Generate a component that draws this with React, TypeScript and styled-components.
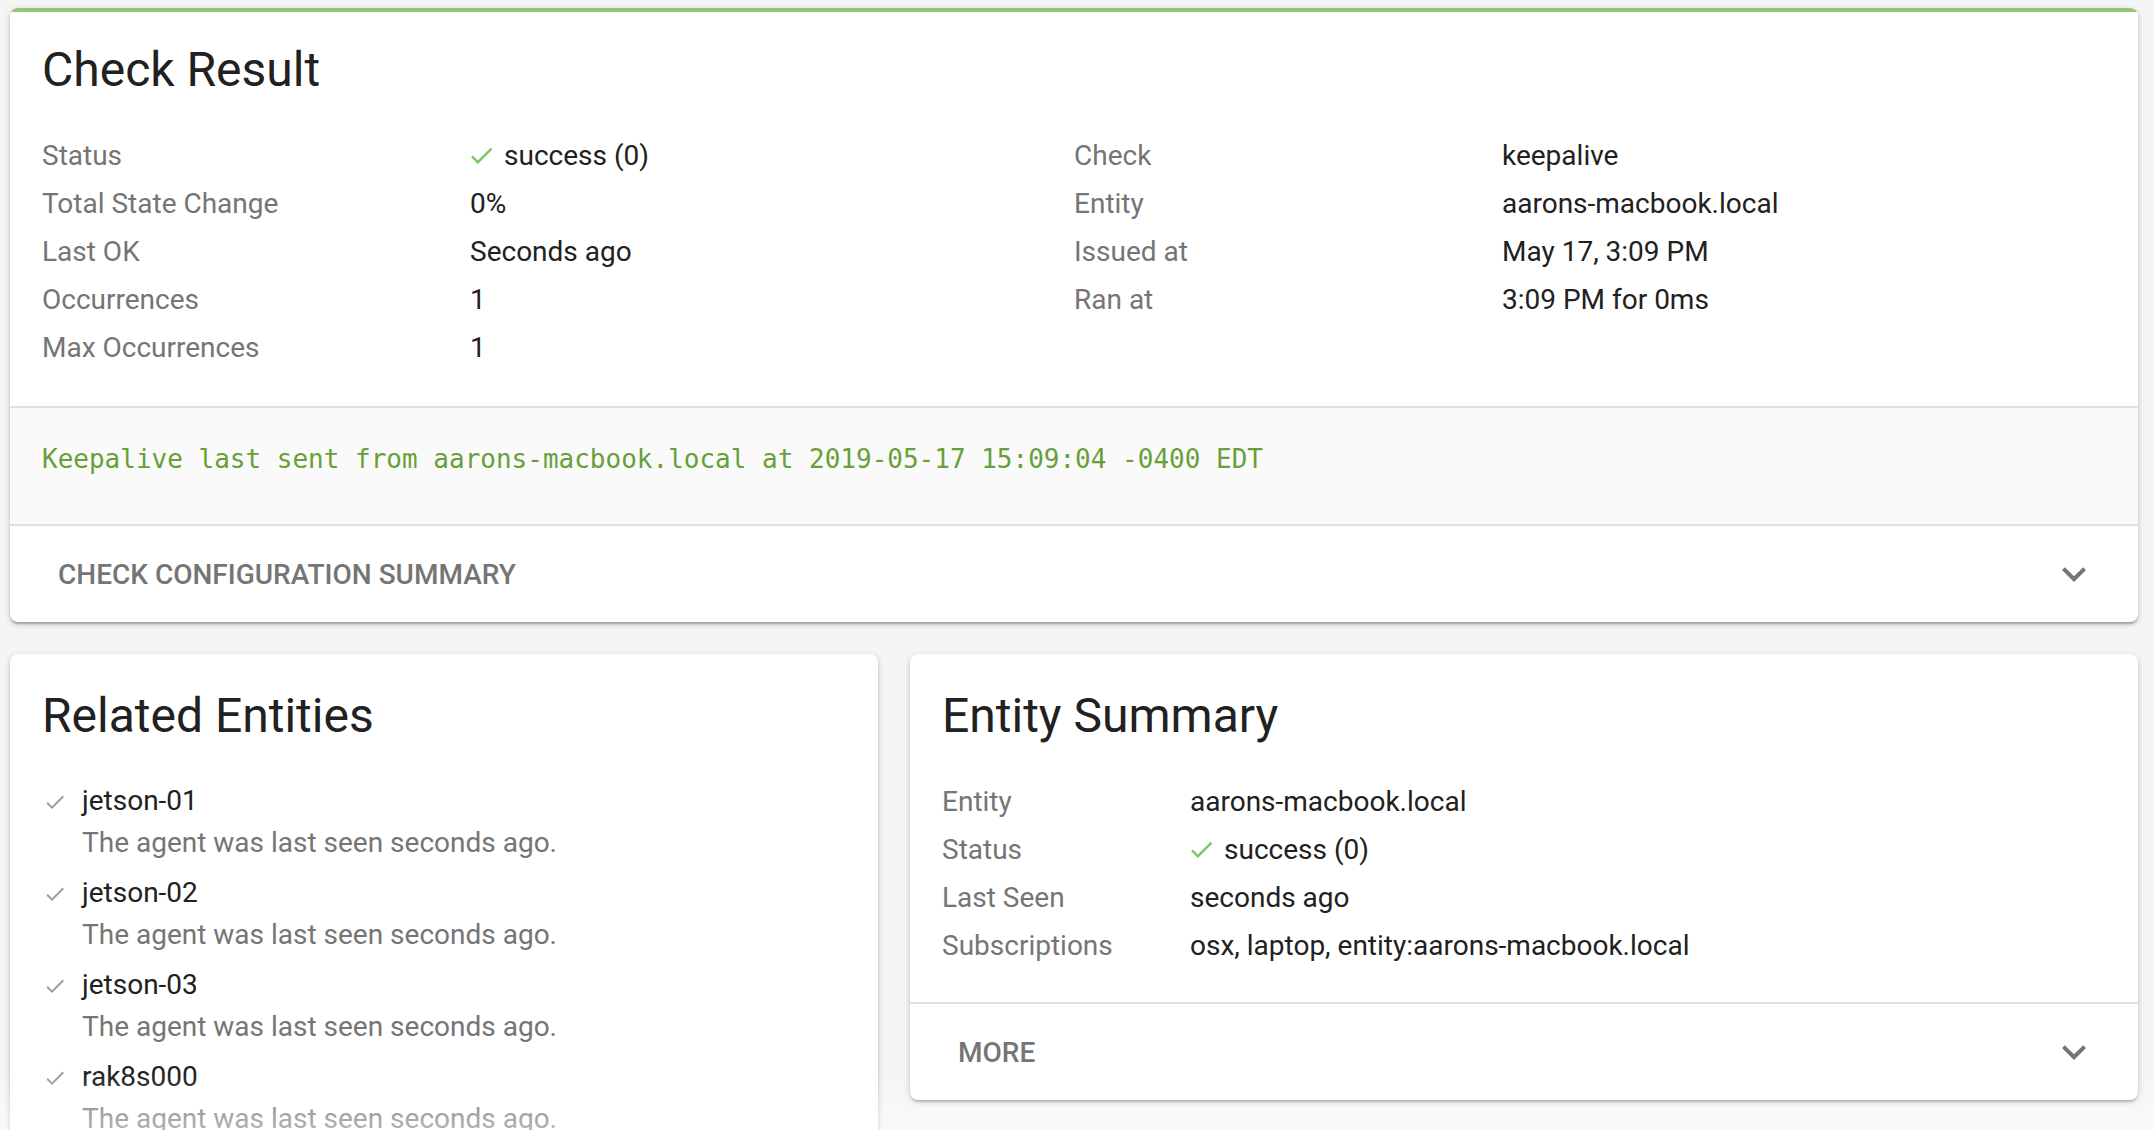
import React from 'react';
import styled, { createGlobalStyle } from 'styled-components';

const GlobalStyle = createGlobalStyle`
  * { box-sizing: border-box; }
  html, body { margin: 0; padding: 0; background: #f5f5f5; }
  body {
    font-family: Roboto, "Noto Sans", "Liberation Sans", Arial, sans-serif;
    -webkit-font-smoothing: antialiased;
  }
`;

const Page = styled.main`
  position: relative;
  height: 100vh;
  overflow: hidden;
  padding: 8px 16px 0 10px;
  display: flex;
  flex-direction: column;
  gap: 32px;
  & > * {
    flex-shrink: 0;
  }
`;

const BottomFade = styled.div`
  position: absolute;
  left: 0;
  right: 0;
  bottom: 0;
  height: 56px;
  pointer-events: none;
  background: linear-gradient(to bottom, rgba(255, 255, 255, 0), rgba(255, 255, 255, 0.45));
`;

const Card = styled.section<{ $accent?: string }>`
  position: relative;
  background: #fff;
  border-radius: 8px;
  overflow: hidden;
  box-shadow: 0 2px 6px rgba(0, 0, 0, 0.2), 0 2px 2px rgba(0, 0, 0, 0.14),
    0 4px 2px -2px rgba(0, 0, 0, 0.12);
  &::before {
    content: '';
    display: ${(p) => (p.$accent ? 'block' : 'none')};
    position: absolute;
    top: 0;
    left: 0;
    right: 0;
    height: 4px;
    background: ${(p) => p.$accent || 'transparent'};
  }
`;

const CardBody = styled.div<{ $bottom?: number }>`
  padding: 34px 32px ${(p) => p.$bottom ?? 34}px;
`;

const Title = styled.h2`
  margin: 0 0 34px;
  font-size: 48px;
  line-height: 56px;
  font-weight: 400;
  color: #212121;
`;

const Columns = styled.div`
  display: grid;
  grid-template-columns: 1fr 1fr;
`;

const FieldList = styled.dl<{ $labelWidth: number }>`
  margin: 0;
  display: grid;
  grid-template-columns: ${(p) => p.$labelWidth}px 1fr;
  grid-auto-rows: 48px;
  font-size: 28px;
  line-height: 48px;
`;

const Label = styled.dt`
  margin: 0;
  color: #757575;
  white-space: nowrap;
`;

const Value = styled.dd`
  margin: 0;
  color: #212121;
  white-space: nowrap;
`;

const StatusIcon = styled.svg`
  width: 29px;
  height: 29px;
  vertical-align: middle;
  margin: -4px 8px 0 -3px;
  fill: #7dc367;
`;

const Message = styled.pre`
  margin: 0;
  padding: 29px 32px 43px;
  background: #fafafa;
  border-top: 2px solid #e0e0e0;
  border-bottom: 2px solid #e0e0e0;
  font-family: "DejaVu Sans Mono", "Liberation Mono", monospace;
  font-size: 26px;
  line-height: 44px;
  color: #689f38;
  white-space: pre;
`;

const Summary = styled.div<{ $divider?: boolean }>`
  height: ${(p) => (p.$divider ? 98 : 96)}px;
  border-top: ${(p) => (p.$divider ? '2px solid #e0e0e0' : 'none')};
  padding: 0 40px 0 48px;
  display: flex;
  align-items: center;
  justify-content: space-between;
  font-size: 28px;
  font-weight: 500;
  text-transform: uppercase;
  color: #757575;
  cursor: pointer;
`;

const Chevron = styled.svg`
  width: 48px;
  height: 48px;
  fill: #757575;
`;

const LowerGrid = styled.div`
  display: grid;
  grid-template-columns: 868fr 1228fr;
  gap: 32px;
  align-items: start;
`;

const EntityList = styled.ul`
  list-style: none;
  margin: 36px 0 0;
  padding: 0;
  display: flex;
  flex-direction: column;
`;

const EntityItem = styled.li`
  display: grid;
  grid-template-columns: 40px 1fr;
  padding-bottom: 8px;
  font-size: 28px;
  line-height: 42px;
`;

const ListIcon = styled.svg`
  width: 24px;
  height: 24px;
  margin: 10px 0 0 1px;
  fill: #9e9e9e;
`;

const EntityName = styled.div`
  color: #212121;
`;

const EntityDesc = styled.div`
  color: #757575;
`;

const CHECK_PATH = 'M9 16.17L4.83 12l-1.42 1.41L9 19 21 7l-1.41-1.41z';
const EXPAND_PATH = 'M16.59 8.59L12 13.17 7.41 8.59 6 10l6 6 6-6z';

const Success = () => (
  <>
    <StatusIcon viewBox="0 0 24 24">
      <path d={CHECK_PATH} />
    </StatusIcon>
    success (0)
  </>
);

type Field = { label: string; value: React.ReactNode };

const leftFields: Field[] = [
  { label: 'Status', value: <Success /> },
  { label: 'Total State Change', value: '0%' },
  { label: 'Last OK', value: 'Seconds ago' },
  { label: 'Occurrences', value: '1' },
  { label: 'Max Occurrences', value: '1' },
];

const rightFields: Field[] = [
  { label: 'Check', value: 'keepalive' },
  { label: 'Entity', value: 'aarons-macbook.local' },
  { label: 'Issued at', value: 'May 17, 3:09 PM' },
  { label: 'Ran at', value: '3:09 PM for 0ms' },
];

const entitySummary: Field[] = [
  { label: 'Entity', value: 'aarons-macbook.local' },
  { label: 'Status', value: <Success /> },
  { label: 'Last Seen', value: 'seconds ago' },
  { label: 'Subscriptions', value: 'osx, laptop, entity:aarons-macbook.local' },
];

const related = ['jetson-01', 'jetson-02', 'jetson-03', 'rak8s000', 'rak8s001'];

const Fields = ({ items, labelWidth }: { items: Field[]; labelWidth: number }) => (
  <FieldList $labelWidth={labelWidth}>
    {items.map((f) => (
      <React.Fragment key={f.label}>
        <Label>{f.label}</Label>
        <Value>{f.value}</Value>
      </React.Fragment>
    ))}
  </FieldList>
);

const ExpandRow = ({ title, divider }: { title: string; divider?: boolean }) => (
  <Summary $divider={divider}>
    <span>{title}</span>
    <Chevron viewBox="0 0 24 24">
      <path d={EXPAND_PATH} />
    </Chevron>
  </Summary>
);

export default function App() {
  return (
    <>
      <GlobalStyle />
      <Page>
        <Card $accent="#94c774">
          <CardBody>
            <Title>Check Result</Title>
            <Columns>
              <Fields items={leftFields} labelWidth={428} />
              <Fields items={rightFields} labelWidth={428} />
            </Columns>
          </CardBody>
          <Message>Keepalive last sent from aarons-macbook.local at 2019-05-17 15:09:04 -0400 EDT</Message>
          <ExpandRow title="Check Configuration Summary" />
        </Card>

        <LowerGrid>
          <Card>
            <CardBody>
              <Title>Related Entities</Title>
              <EntityList>
                {related.map((name) => (
                  <EntityItem key={name}>
                    <ListIcon viewBox="0 0 24 24">
                      <path d={CHECK_PATH} />
                    </ListIcon>
                    <div>
                      <EntityName>{name}</EntityName>
                      <EntityDesc>The agent was last seen seconds ago.</EntityDesc>
                    </div>
                  </EntityItem>
                ))}
              </EntityList>
            </CardBody>
          </Card>

          <Card>
            <CardBody $bottom={32}>
              <Title>Entity Summary</Title>
              <Fields items={entitySummary} labelWidth={248} />
            </CardBody>
            <ExpandRow title="More" divider />
          </Card>
        </LowerGrid>
        <BottomFade />
      </Page>
    </>
  );
}
